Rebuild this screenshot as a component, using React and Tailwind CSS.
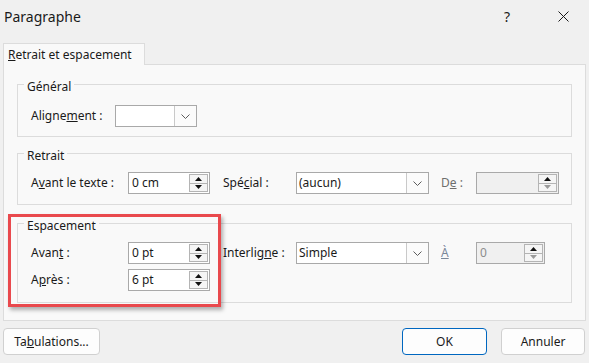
import React from "react";

function Arrow({ up, muted }) {
  return (
    <svg width="7" height="4" viewBox="0 0 7 4">
      <polygon
        points={up ? "0,4 3.5,0 7,4" : "0,0 3.5,4 7,0"}
        fill={muted ? "#9a9a9a" : "#111111"}
      />
    </svg>
  );
}

function Spin({ value, width, disabled }) {
  return (
    <div
      className={`flex h-[22px] ${width} border border-[#a9a9a9] ${
        disabled ? "bg-[#f0f0f0] text-[#8c8c8c]" : "bg-white"
      }`}
    >
      <div className="flex-1 pl-[3px] flex items-center">{value}</div>
      <div className="flex flex-col w-[19px] my-[1px] mr-[1px]">
        <div className="flex-1 border border-[#b4b4b4] bg-[#f5f5f5] flex items-center justify-center">
          <Arrow up />
        </div>
        <div className="flex-1 border border-t-0 border-[#b4b4b4] bg-[#f5f5f5] flex items-center justify-center">
          <Arrow muted={disabled} />
        </div>
      </div>
    </div>
  );
}

function Combo({ value, width }) {
  return (
    <div className={`flex h-[22px] ${width} border border-[#a9a9a9] bg-white`}>
      <div className="flex-1 pl-[2px] flex items-center">{value}</div>
      <div className="w-[22px] border-l border-[#c9c9c9] bg-[#fbfbfb] flex items-center justify-center">
        <svg width="9" height="5" viewBox="0 0 9 5">
          <polyline points="0.5,0.5 4.5,4.5 8.5,0.5" fill="none" stroke="#5c5c5c" strokeWidth="1" />
        </svg>
      </div>
    </div>
  );
}

function Group({ title, className, children }) {
  return (
    <fieldset className={`border border-[#dcdcdc] px-0 ${className}`}>
      <legend className="ml-[6px] px-[3px] pt-[6px] leading-[14px]">{title}</legend>
      {children}
    </fieldset>
  );
}

function Btn({ children, width, primary }) {
  return (
    <button
      className={`h-[27px] ${width} rounded-[4px] border ${
        primary ? "border-[#0067c0]" : "border-[#d0d0d0]"
      } bg-[#fdfdfd] flex items-center justify-center`}
    >
      {children}
    </button>
  );
}

export default function App() {
  return (
    <div className="relative w-[589px] h-[363px] overflow-hidden bg-[#f0f0f0] flex flex-col font-['Noto_Sans',sans-serif] text-[12px] text-[#1a1a1a]">
      {/* Title bar */}
      <div className="h-[33px] flex items-center pl-[4px] pr-[3px]">
        <span className="text-[14px]">Paragraphe</span>
        <div className="ml-auto flex items-center gap-[10px]">
          <span className="w-[46px] text-center text-[14px]">?</span>
          <span className="w-[46px] flex justify-center">
            <svg width="11" height="11" viewBox="0 0 11 11">
              <path d="M0.5 0.5 L10.5 10.5 M10.5 0.5 L0.5 10.5" stroke="#1a1a1a" strokeWidth="1" />
            </svg>
          </span>
        </div>
      </div>

      {/* Tab strip */}
      <div className="mt-[10px] px-[3px] flex">
        <div className="relative z-10 -mb-[1px] h-[22px] w-[142px] border-t border-l border-r border-[#dcdcdc] bg-[#f9f9f9] pl-[4px] flex items-center">
          <span>
            <span className="underline">R</span>etrait et espacement
          </span>
        </div>
      </div>

      {/* Tab panel */}
      <div className="mx-[3px] h-[257px] border border-[#dcdcdc] bg-[#f9f9f9] px-[13px] pt-[9px]">
        <Group title="Général">
          <div className="flex items-center h-[22px] pl-[13px] mt-[11px] mb-[9px]">
            <span className="w-[84px]">
              Aligne<span className="underline">m</span>ent :
            </span>
            <Combo value="" width="w-[82px]" />
          </div>
        </Group>

        <Group title="Retrait" className="mt-[6px]">
          <div className="flex items-center h-[22px] pl-[13px] mt-[9px] mb-[10px]">
            <span className="w-[97px]">
              A<span className="underline">v</span>ant le texte :
            </span>
            <Spin value="0 cm" width="w-[82px]" />
            <span className="ml-[13px] w-[73px]">
              Spé<span className="underline">c</span>ial :
            </span>
            <Combo value="(aucun)" width="w-[133px]" />
            <span className="ml-[12px] w-[35px] text-[#6e6e6e]">
              D<span className="underline">e</span> :
            </span>
            <Spin value="" width="w-[83px]" disabled />
          </div>
        </Group>

        <Group title="Espacement" className="mt-[8px]">
          <div className="pl-[13px] mt-[9px] mb-[11px] flex flex-col gap-[5px]">
            <div className="flex items-center h-[22px]">
              <span className="w-[97px]">
                Avan<span className="underline">t</span> :
              </span>
              <Spin value="0 pt" width="w-[82px]" />
              <span className="ml-[13px] w-[73px]">
                Interlig<span className="underline">n</span>e :
              </span>
              <Combo value="Simple" width="w-[133px]" />
              <span className="ml-[12px] w-[35px] text-[#7a8799]">
                <span className="underline">À</span>
              </span>
              <Spin value="0" width="w-[69px]" disabled />
            </div>
            <div className="flex items-center h-[22px]">
              <span className="w-[97px]">
                A<span className="underline">p</span>rès :
              </span>
              <Spin value="6 pt" width="w-[82px]" />
            </div>
          </div>
        </Group>
      </div>

      {/* Bottom buttons */}
      <div className="mt-[7px] pl-[3px] pr-[4px] flex items-center">
        <Btn width="w-[97px]">
          <span>
            Ta<span className="underline">b</span>ulations...
          </span>
        </Btn>
        <div className="ml-auto flex gap-[14px]">
          <Btn width="w-[85px]" primary>
            OK
          </Btn>
          <Btn width="w-[84px]">Annuler</Btn>
        </div>
      </div>

      {/* Red highlight annotation */}
      <div className="absolute left-[8px] top-[214px] w-[213px] h-[93px] border-[3px] border-[#e9494d] shadow-[2px_3px_4px_rgba(0,0,0,0.3)]" />
    </div>
  );
}
